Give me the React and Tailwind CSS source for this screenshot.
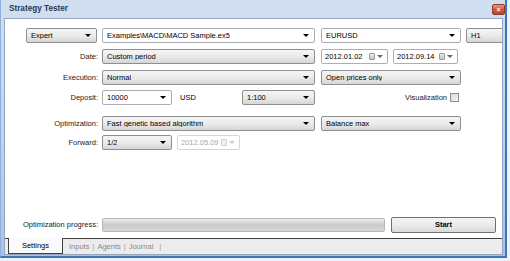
import React from 'react';

const Arrow = ({ color = '#000' }) => (
  <svg width="6" height="3" viewBox="0 0 6 3" className="shrink-0">
    <path d="M0 0h6L3 3z" fill={color} />
  </svg>
);

// combobox: gray = dropdown list, white = editable
const Combo = ({ w, white, children }) => (
  <div
    className={`${w} shrink-0 h-[15px] flex items-center justify-between pl-[4px] pr-[5px] rounded-[2px] border ${
      white
        ? 'bg-white border-[#abadb3]'
        : 'bg-linear-to-b from-[#f5f5f5] via-[#ebebeb] to-[#d6d6d6] border-[#8e8f8f]'
    }`}
  >
    <span className="truncate">{children}</span>
    <Arrow />
  </div>
);

const DateBox = ({ w, value, disabled }) => (
  <div
    className={`${w} shrink-0 h-[15px] flex items-center justify-between pl-[3px] pr-[4px] rounded-[2px] border bg-white ${
      disabled ? 'border-[#d6d6d6] text-[#a8a8a8]' : 'border-[#abadb3]'
    }`}
  >
    <span>{value}</span>
    <div className="flex items-center gap-[2px]">
      <div
        className={`w-[6px] h-[7px] rounded-[1px] border ${
          disabled
            ? 'border-[#d0d0d0] bg-[#f0f0f0]'
            : 'border-[#9a9a9a] bg-linear-to-b from-[#eeeeee] to-[#c4c4c4]'
        }`}
      />
      <Arrow color={disabled ? '#c4ccd8' : '#4d6b94'} />
    </div>
  </div>
);

const Label = ({ children }) => (
  <div className="w-[93px] shrink-0 pr-[0px] text-right mr-[4px] text-[#1a1a1a]">{children}</div>
);

export default function App() {
  return (
    <div
      className="w-[510px] h-[261px] bg-[#eef3f9] overflow-hidden text-[7.5px] text-black leading-none"
      style={{ fontFamily: '"Liberation Sans", Arial, sans-serif' }}
    >
      <div className="w-[507px] h-[258px] flex flex-col bg-linear-to-b from-[#d2dff0] via-[#c2d4ec] to-[#a9c3e6] border-l border-r-2 border-b-2 border-l-[#8fb0dc] border-r-[#3f74bb] border-b-[#3f74bb]">
        {/* title bar */}
        <div className="h-[18px] shrink-0 flex items-start justify-between pl-[8px] pr-[0px]">
          <span className="mt-[5px] text-[8.2px] font-bold text-[#263a55]">Strategy Tester</span>
          <div className="mt-[4px] w-[13px] h-[11px] rounded-[2px] border border-[#8c3b2a] bg-linear-to-b from-[#e89a80] via-[#d0583a] to-[#c0452c] flex items-center justify-center">
            <span className="text-white text-[7px] font-bold leading-none">×</span>
          </div>
        </div>

        {/* panel */}
        <div className="flex-1 ml-[3px] mr-[2px] mb-[1px] border border-[#93a6bf] bg-white flex flex-col overflow-hidden">
          <div className="flex-1 flex flex-col">
            <div className="mt-[9px] pl-[21px] flex items-center">
              <Combo w="w-[71px]">Expert</Combo>
              <div className="ml-[5px]">
                <Combo w="w-[213px]" white>Examples\MACD\MACD Sample.ex5</Combo>
              </div>
              <div className="ml-[6px]">
                <Combo w="w-[140px]" white>EURUSD</Combo>
              </div>
              <div className="ml-[5px]">
                <Combo w="w-[60px]">H1</Combo>
              </div>
            </div>

            <div className="mt-[6px] flex items-center">
              <Label>Date:</Label>
              <Combo w="w-[213px]">Custom period</Combo>
              <div className="ml-[6px]">
                <DateBox w="w-[67px]" value="2012.01.02" />
              </div>
              <div className="ml-[5px]">
                <DateBox w="w-[65px]" value="2012.09.14" />
              </div>
            </div>

            <div className="mt-[6px] flex items-center">
              <Label>Execution:</Label>
              <Combo w="w-[213px]">Normal</Combo>
              <div className="ml-[6px]">
                <Combo w="w-[140px]">Open prices only</Combo>
              </div>
            </div>

            <div className="mt-[5px] flex items-center">
              <Label>Deposit:</Label>
              <Combo w="w-[70px]" white>10000</Combo>
              <div className="w-[70px] shrink-0 pl-[8px]">USD</div>
              <Combo w="w-[73px]">1:100</Combo>
              <div className="ml-auto mr-[43px] flex items-center">
                <span className="text-[#1a1a1a]">Visualization</span>
                <div className="ml-[3px] w-[9px] h-[9px] border border-[#8e8f8f] bg-linear-to-br from-[#d8d8d8] to-[#f6f6f6]" />
              </div>
            </div>

            <div className="mt-[11px] flex items-center">
              <Label>Optimization:</Label>
              <Combo w="w-[213px]">Fast genetic based algorithm</Combo>
              <div className="ml-[6px]">
                <Combo w="w-[140px]">Balance max</Combo>
              </div>
            </div>

            <div className="mt-[4px] flex items-center">
              <Label>Forward:</Label>
              <Combo w="w-[70px]">1/2</Combo>
              <div className="ml-[5px]">
                <DateBox w="w-[63px]" value="2012.05.09" disabled />
              </div>
            </div>

            {/* progress */}
            <div className="mt-auto mb-[5px] flex items-center">
              <Label>Optimization progress:</Label>
              <div className="w-[283px] h-[14px] rounded-[2px] border border-[#b8b8b8] bg-linear-to-b from-[#ececec] via-[#c9c9c9] to-[#d6d6d6]" />
              <div className="ml-[6px] w-[105px] h-[16px] rounded-[2px] border border-[#707070] bg-linear-to-b from-[#f4f4f4] via-[#ebebeb] to-[#d9d9d9] flex items-center justify-center font-bold">
                Start
              </div>
            </div>
          </div>

          {/* tabs */}
          <div className="h-[16px] shrink-0 border-t border-[#404040] bg-[#ececec] flex items-stretch">
            <div className="ml-[3px] -mt-[1px] w-[55px] border-l border-r border-b border-[#404040] bg-[#fafafa] flex items-center justify-center">
              Settings
            </div>
            <div className="ml-[6px] flex items-center text-[#8a8a8a]">
              <span>Inputs</span>
              <span className="mx-[3px] text-[#9a9a9a]">|</span>
              <span>Agents</span>
              <span className="mx-[3px] text-[#9a9a9a]">|</span>
              <span>Journal</span>
              <span className="ml-[6px] text-[#9a9a9a]">|</span>
            </div>
          </div>
        </div>
      </div>
    </div>
  );
}
